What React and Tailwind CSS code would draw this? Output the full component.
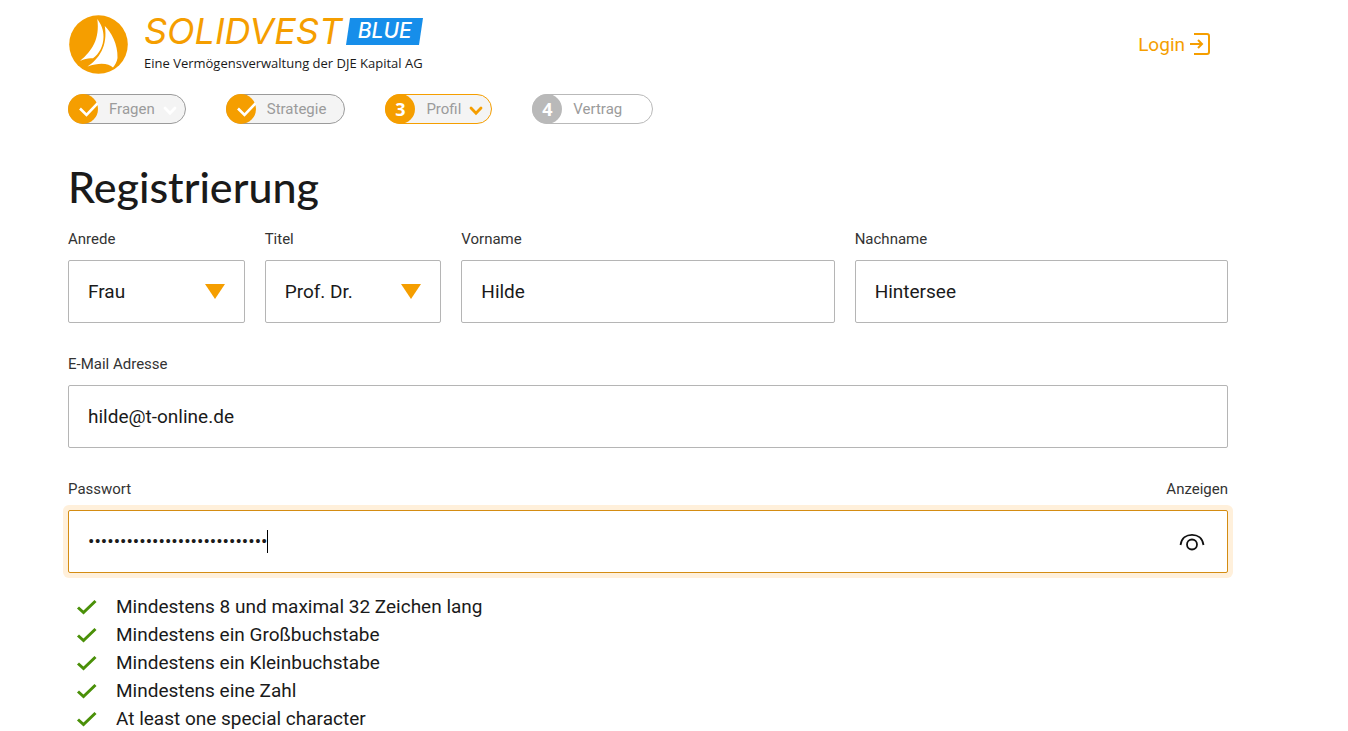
import { useState } from "react";

const steps = [
  { nr: 1, label: "Fragen", state: "done", menu: true },
  { nr: 2, label: "Strategie", state: "done" },
  { nr: 3, label: "Profil", state: "active", menu: true },
  { nr: 4, label: "Vertrag", state: "open" },
];

const stepStyles = {
  done: {
    pill: "border-[#9b9b9b] bg-[#f4f4f4]",
    badge: "bg-[#f59e00]",
    chevron: "text-white",
  },
  active: {
    pill: "border-[#f59e00] bg-[#f4f4f4]",
    badge: "bg-[#f59e00]",
    chevron: "text-[#f59e00]",
  },
  open: {
    pill: "border-[#b9b9b9] bg-white",
    badge: "bg-[#b9b9b9]",
    chevron: "text-[#b9b9b9]",
  },
};

const stepPadding = (step) => {
  if (step.menu) return "pr-2";
  return step.state === "open" ? "pr-[30px]" : "pr-[18px]";
};

const rules = [
  "Mindestens 8 und maximal 32 Zeichen lang",
  "Mindestens ein Großbuchstabe",
  "Mindestens ein Kleinbuchstabe",
  "Mindestens eine Zahl",
  "At least one special character",
];

const fieldStyle =
  "block w-full h-[63px] rounded-xs border border-[#b5b5b5] bg-white px-[19px] text-[19px] text-[#1a1a1a] outline-none";

const Logo = () => (
  <a href="#" className="flex items-start gap-4">
    <svg viewBox="0 0 60 60" className="size-[60px] shrink-0">
      <circle cx="30.500" cy="29.500" r="29.300" fill="#f59e00" />
      <path
        d="M29.300 4 C33 9 35.800 15 35.500 22 C35.500 31 31 39 25 43.300 C21 42.800 17 43.500 12 46 C24 36 32 24 29.300 4 Z"
        fill="#fff"
      />
      <path
        d="M36.800 11 C43 17 50 29 49.500 43 C49 47 47 50 45 52.500 C41 48.500 32 47 19.500 51.500 C31 44 40 31 36.800 11 Z"
        fill="#fff"
      />
    </svg>
    <span className="flex flex-col">
      <span className="flex items-center gap-1">
        <span className="font-['Inter',sans-serif] text-[36px] leading-8 italic text-[#f59e00]">
          SOLIDVEST
        </span>
        <span className="relative flex h-[27px] w-[77px] items-center justify-center">
          <svg
            viewBox="0 0 77 27"
            preserveAspectRatio="none"
            className="absolute inset-0 size-full"
          >
            <path d="M4 0 H77 L73 27 H0 Z" fill="#168eea" />
          </svg>
          <span className="relative font-['Inter',sans-serif] text-[21px] leading-6 font-medium italic text-white">
            BLUE
          </span>
        </span>
      </span>
      <span className="mt-1.5 font-['Open_Sans',sans-serif] text-[13px] leading-5 font-medium text-[#1a1a1a]">
        Eine Vermögensverwaltung der DJE Kapital AG
      </span>
    </span>
  </a>
);

const Step = ({ step }) => {
  const style = stepStyles[step.state];
  return (
    <li>
      <button
        type="button"
        className={`flex h-[30px] items-center rounded-full border text-[15px] text-[#9b9b9b] ${stepPadding(
          step
        )} ${style.pill}`}
      >
        <span
          className={`-ml-px flex size-[30px] items-center justify-center rounded-full font-['Open_Sans',sans-serif] text-lg font-bold text-white ${style.badge}`}
        >
          {step.state === "done" ? (
            <svg viewBox="0 0 30 30" className="size-[30px]" fill="none">
              <path d="M12 14.500 L18.500 21 L29.500 9.500" stroke="#fff" strokeWidth="2.6" />
            </svg>
          ) : (
            step.nr
          )}
        </span>
        <span className="ml-[11px]">{step.label}</span>
        {step.menu && (
          <svg viewBox="0 0 14 10" className={`mt-1 ml-2 w-3.5 ${style.chevron}`} fill="none">
            <path
              d="M2 2 L7 7.200 L12 2"
              stroke="currentColor"
              strokeWidth="2.8"
              strokeLinecap="round"
            />
          </svg>
        )}
      </button>
    </li>
  );
};

const Field = ({ id, label, className = "", aside, children }) => (
  <div className={className}>
    <div className="mb-[11px] flex justify-between text-[15px] leading-5 text-[#333]">
      <label htmlFor={id}>{label}</label>
      {aside}
    </div>
    {children}
  </div>
);

const SelectField = ({ id, label, options }) => (
  <Field id={id} label={label}>
    <div className="relative">
      <select id={id} className={`${fieldStyle} appearance-none pt-0.5`}>
        {options.map((option) => (
          <option key={option}>{option}</option>
        ))}
      </select>
      <svg
        viewBox="0 0 20 15"
        className="pointer-events-none absolute top-6 right-5 w-5"
      >
        <path d="M0 0 H20 L10 15 Z" fill="#f59e00" />
      </svg>
    </div>
  </Field>
);

const App = () => {
  const [visible, setVisible] = useState(false);

  return (
    <div className="bg-white pr-[120px] pl-[68px] font-['Roboto',sans-serif] text-[#1a1a1a]">
      <header className="flex items-start justify-between pt-[15px] pr-[18px]">
        <Logo />
        <a href="#login" className="mt-4 flex items-center gap-1 text-[19px] leading-7 text-[#f59e00]">
          Login
          <svg
            viewBox="0 0 21 24"
            className="mb-0.5 w-[21px]"
            fill="none"
            stroke="currentColor"
            strokeWidth="2"
          >
            <path d="M5 2 H18 Q20 2 20 4 V20 Q20 22 18 22 H5" />
            <path d="M1 12 H13 M9 8 L13 12 L9 16" />
          </svg>
        </a>
      </header>

      <ol className="mt-[19px] flex gap-10">
        {steps.map((step) => (
          <Step key={step.nr} step={step} />
        ))}
      </ol>

      <h1 className="mt-[35px] font-['Lato',sans-serif] text-[43px] leading-[56px] font-medium">
        Registrierung
      </h1>

      <form className="mt-3.5" onSubmit={(e) => e.preventDefault()}>
        <div className="grid grid-cols-6 gap-x-5 gap-y-[31px]">
          <SelectField id="anrede" label="Anrede" options={["Frau", "Herr"]} />
          <SelectField id="titel" label="Titel" options={["Prof. Dr.", "Dr.", "Prof."]} />
          <Field id="vorname" label="Vorname" className="col-span-2">
            <input id="vorname" type="text" defaultValue="Hilde" className={fieldStyle} />
          </Field>
          <Field id="nachname" label="Nachname" className="col-span-2">
            <input id="nachname" type="text" defaultValue="Hintersee" className={fieldStyle} />
          </Field>
          <Field id="email" label="E-Mail Adresse" className="col-span-6">
            <input id="email" type="email" defaultValue="hilde@t-online.de" className={fieldStyle} />
          </Field>
          <Field
            id="passwort"
            label="Passwort"
            className="col-span-6"
            aside={<span>Anzeigen</span>}
          >
            <div className="relative">
              <input
                id="passwort"
                type={visible ? "text" : "password"}
                defaultValue="Hilde-Hintersee-Passwort-123"
                className="block h-[63px] w-full rounded-xs border border-[#d48c12] bg-white px-[19px] text-[19px] caret-transparent ring-5 ring-[#fff0db] outline-none"
              />
              <span className="absolute top-5 left-[199px] h-[23px] w-px bg-black" />
              <button
                type="button"
                aria-label="Passwort anzeigen"
                onClick={() => setVisible(!visible)}
                className="absolute top-5 right-[23px]"
              >
                <svg viewBox="0 0 26 24" className="w-[26px]" fill="none" stroke="#111" strokeWidth="1.8">
                  <path d="M1.500 15 C2.500 8 7.500 4.800 13 4.800 C18.500 4.800 23.500 8 24.500 15" />
                  <circle cx="13" cy="14.500" r="5" />
                </svg>
              </button>
            </div>
          </Field>
        </div>

        <ul className="mt-5 pl-2 text-[19px] leading-7">
          {rules.map((rule) => (
            <li key={rule} className="flex items-center gap-[18px]">
              <svg viewBox="0 0 22 16" className="w-[22px]" fill="none">
                <path d="M2 8.500 L7.500 13.500 L19.500 2" stroke="#4a9008" strokeWidth="3" />
              </svg>
              {rule}
            </li>
          ))}
        </ul>
      </form>
    </div>
  );
};

export default App;
